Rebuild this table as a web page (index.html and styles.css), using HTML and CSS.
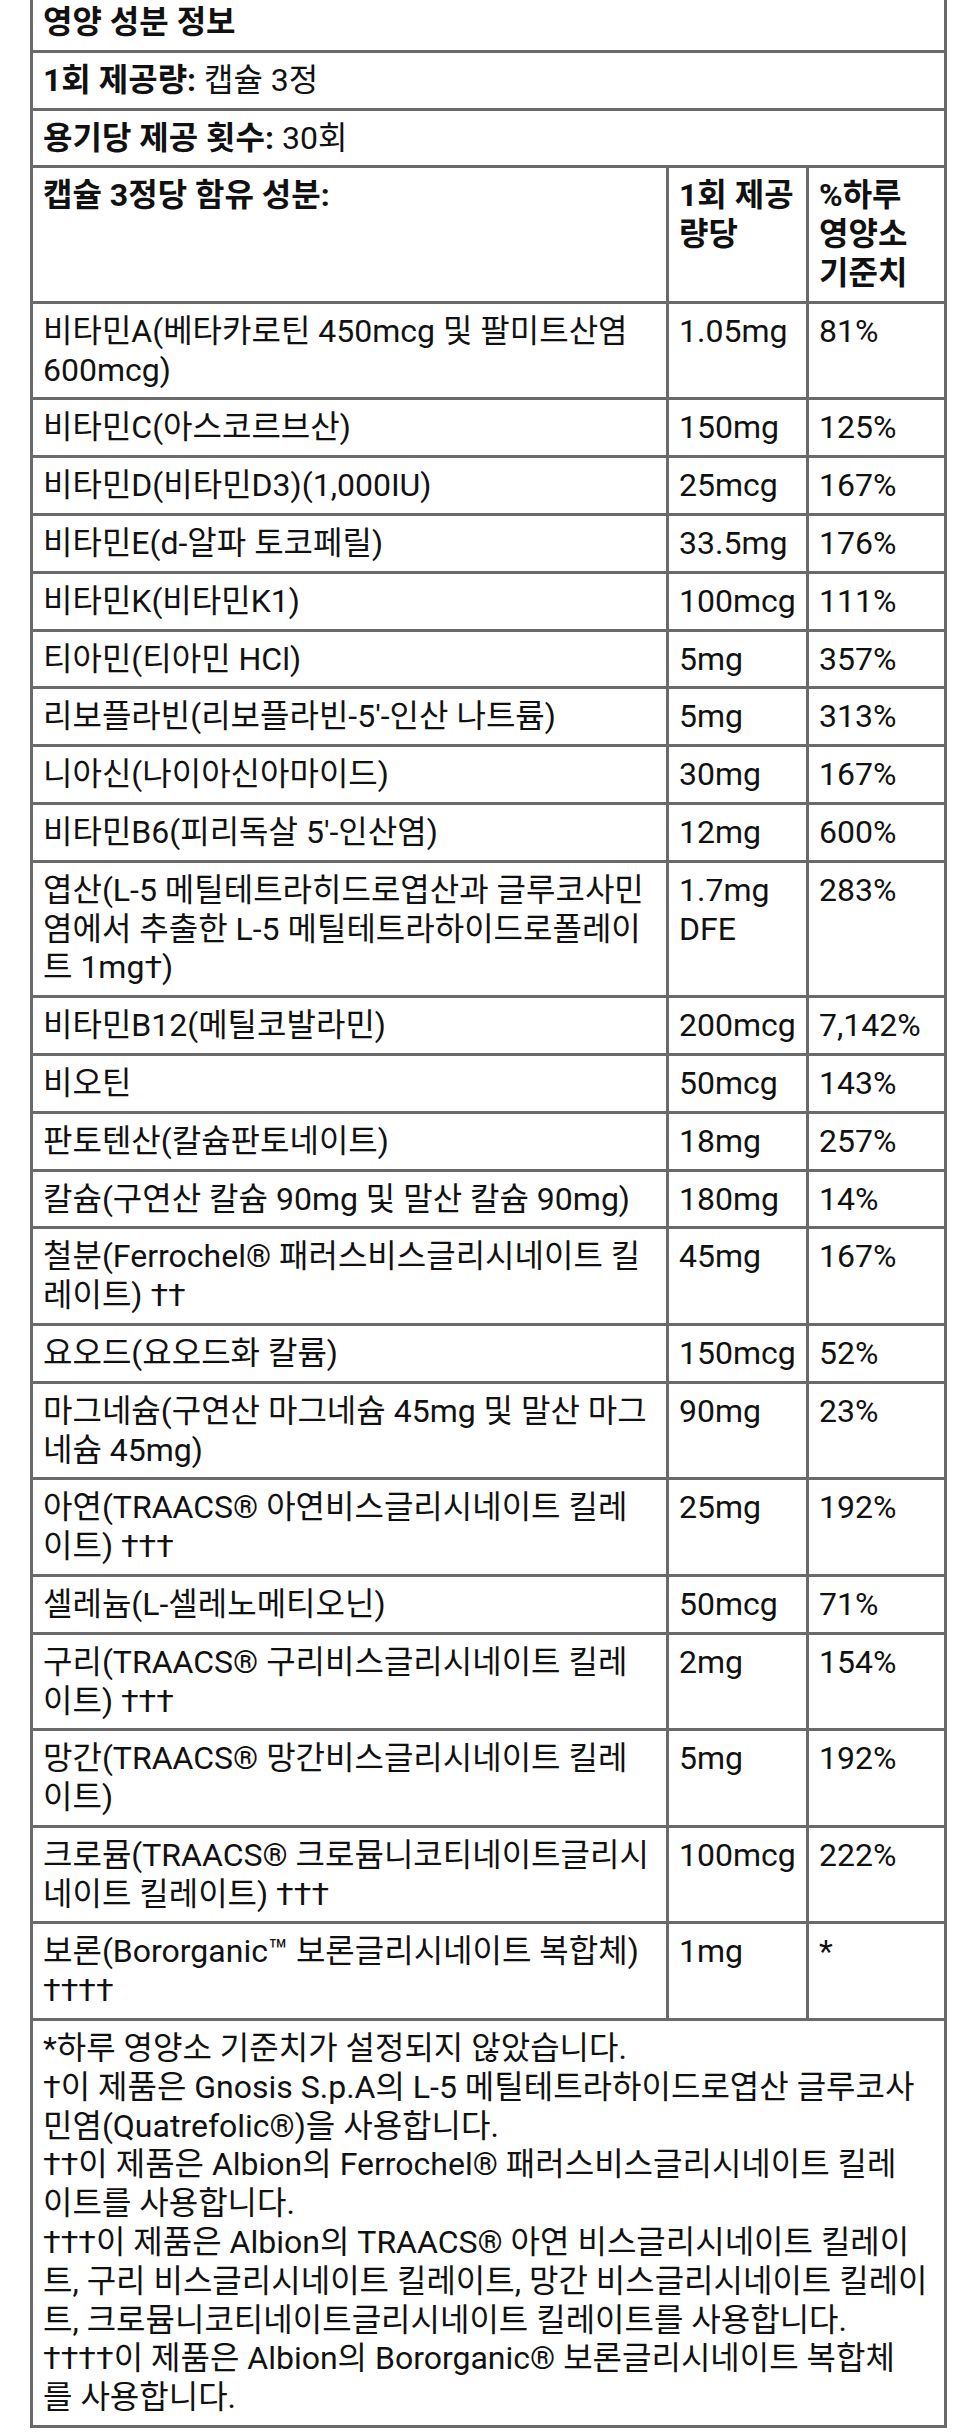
FILE: index.html
```html
<!DOCTYPE html>
<html lang="ko">
<head>
<meta charset="utf-8">
<title>영양 성분 정보</title>
<link rel="stylesheet" href="styles.css">
</head>
<body>
<table class="facts">
  <colgroup>
    <col class="c-name">
    <col class="c-amount">
    <col class="c-dv">
  </colgroup>
  <tbody>
    <tr><th colspan="3" class="title">영양 성분 정보</th></tr>
    <tr><td colspan="3"><b>1회 제공량:</b> 캡슐 3정</td></tr>
    <tr><td colspan="3"><b>용기당 제공 횟수:</b> 30회</td></tr>
    <tr class="head"><th>캡슐 3정당 함유 성분:</th><th>1회 제공 량당</th><th>%하루 영양소 기준치</th></tr>
    <tr><td>비타민A(베타카로틴 450mcg 및 팔미트산염 600mcg)</td><td>1.05mg</td><td>81%</td></tr>
    <tr><td>비타민C(아스코르브산)</td><td>150mg</td><td>125%</td></tr>
    <tr><td>비타민D(비타민D3)(1,000IU)</td><td>25mcg</td><td>167%</td></tr>
    <tr><td>비타민E(d-알파 토코페릴)</td><td>33.5mg</td><td>176%</td></tr>
    <tr><td>비타민K(비타민K1)</td><td>100mcg</td><td>111%</td></tr>
    <tr><td>티아민(티아민 HCl)</td><td>5mg</td><td>357%</td></tr>
    <tr><td>리보플라빈(리보플라빈-5'-인산 나트륨)</td><td>5mg</td><td>313%</td></tr>
    <tr><td>니아신(나이아신아마이드)</td><td>30mg</td><td>167%</td></tr>
    <tr><td>비타민B6(피리독살 5'-인산염)</td><td>12mg</td><td>600%</td></tr>
    <tr><td>엽산(L-5 메틸테트라히드로엽산과 글루코사민 염에서 추출한 L-5 메틸테트라하이드로폴레이트 1mg†)</td><td>1.7mg DFE</td><td>283%</td></tr>
    <tr><td>비타민B12(메틸코발라민)</td><td>200mcg</td><td>7,142%</td></tr>
    <tr><td>비오틴</td><td>50mcg</td><td>143%</td></tr>
    <tr><td>판토텐산(칼슘판토네이트)</td><td>18mg</td><td>257%</td></tr>
    <tr><td>칼슘(구연산 칼슘 90mg 및 말산 칼슘 90mg)</td><td>180mg</td><td>14%</td></tr>
    <tr><td>철분(Ferrochel® 패러스비스글리시네이트 킬레이트) ††</td><td>45mg</td><td>167%</td></tr>
    <tr><td>요오드(요오드화 칼륨)</td><td>150mcg</td><td>52%</td></tr>
    <tr><td>마그네슘(구연산 마그네슘 45mg 및 말산 마그네슘 45mg)</td><td>90mg</td><td>23%</td></tr>
    <tr><td>아연(TRAACS® 아연비스글리시네이트 킬레이트) †††</td><td>25mg</td><td>192%</td></tr>
    <tr><td>셀레늄(L-셀레노메티오닌)</td><td>50mcg</td><td>71%</td></tr>
    <tr><td>구리(TRAACS® 구리비스글리시네이트 킬레이트) †††</td><td>2mg</td><td>154%</td></tr>
    <tr><td>망간(TRAACS® 망간비스글리시네이트 킬레이트)</td><td>5mg</td><td>192%</td></tr>
    <tr><td>크로뮴(TRAACS® 크로뮴니코티네이트글리시네이트 킬레이트) †††</td><td>100mcg</td><td>222%</td></tr>
    <tr><td>보론(Bororganic™ 보론글리시네이트 복합체) ††††</td><td>1mg</td><td>*</td></tr>
    <tr><td colspan="3" class="notes">*하루 영양소 기준치가 설정되지 않았습니다.<br>†이 제품은 Gnosis S.p.A의 L-5 메틸테트라하이드로엽산 글루코사<br>민염(Quatrefolic®)을 사용합니다.<br>††이 제품은 Albion의 Ferrochel® 패러스비스글리시네이트 킬레<br>이트를 사용합니다.<br>†††이 제품은 Albion의 TRAACS® 아연 비스글리시네이트 킬레이<br>트, 구리 비스글리시네이트 킬레이트, 망간 비스글리시네이트 킬레이<br>트, 크로뮴니코티네이트글리시네이트 킬레이트를 사용합니다.<br>††††이 제품은 Albion의 Bororganic® 보론글리시네이트 복합체<br>를 사용합니다.</td></tr>
  </tbody>
</table>
</body>
</html>
```

FILE: styles.css
```css
html, body {
  margin: 0;
  padding: 0;
  background: #fff;
}

body {
  font-family: Roboto, "Noto Sans CJK KR", sans-serif;
  font-size: 32px;
  line-height: 38.8px;
  color: #111;
}

.facts {
  width: 914px;
  margin: -8px 0 0 30px;
  border-collapse: collapse;
  table-layout: fixed;
}

.c-name { width: 636px; }
.c-amount { width: 140px; }
.c-dv { width: 138px; }

.facts th,
.facts td {
  border: 3px solid #6a6a6a;
  padding: 8px 10px;
  text-align: left;
  vertical-align: top;
  font-weight: 400;
}

.facts th,
.facts b {
  font-weight: 700;
}
```
